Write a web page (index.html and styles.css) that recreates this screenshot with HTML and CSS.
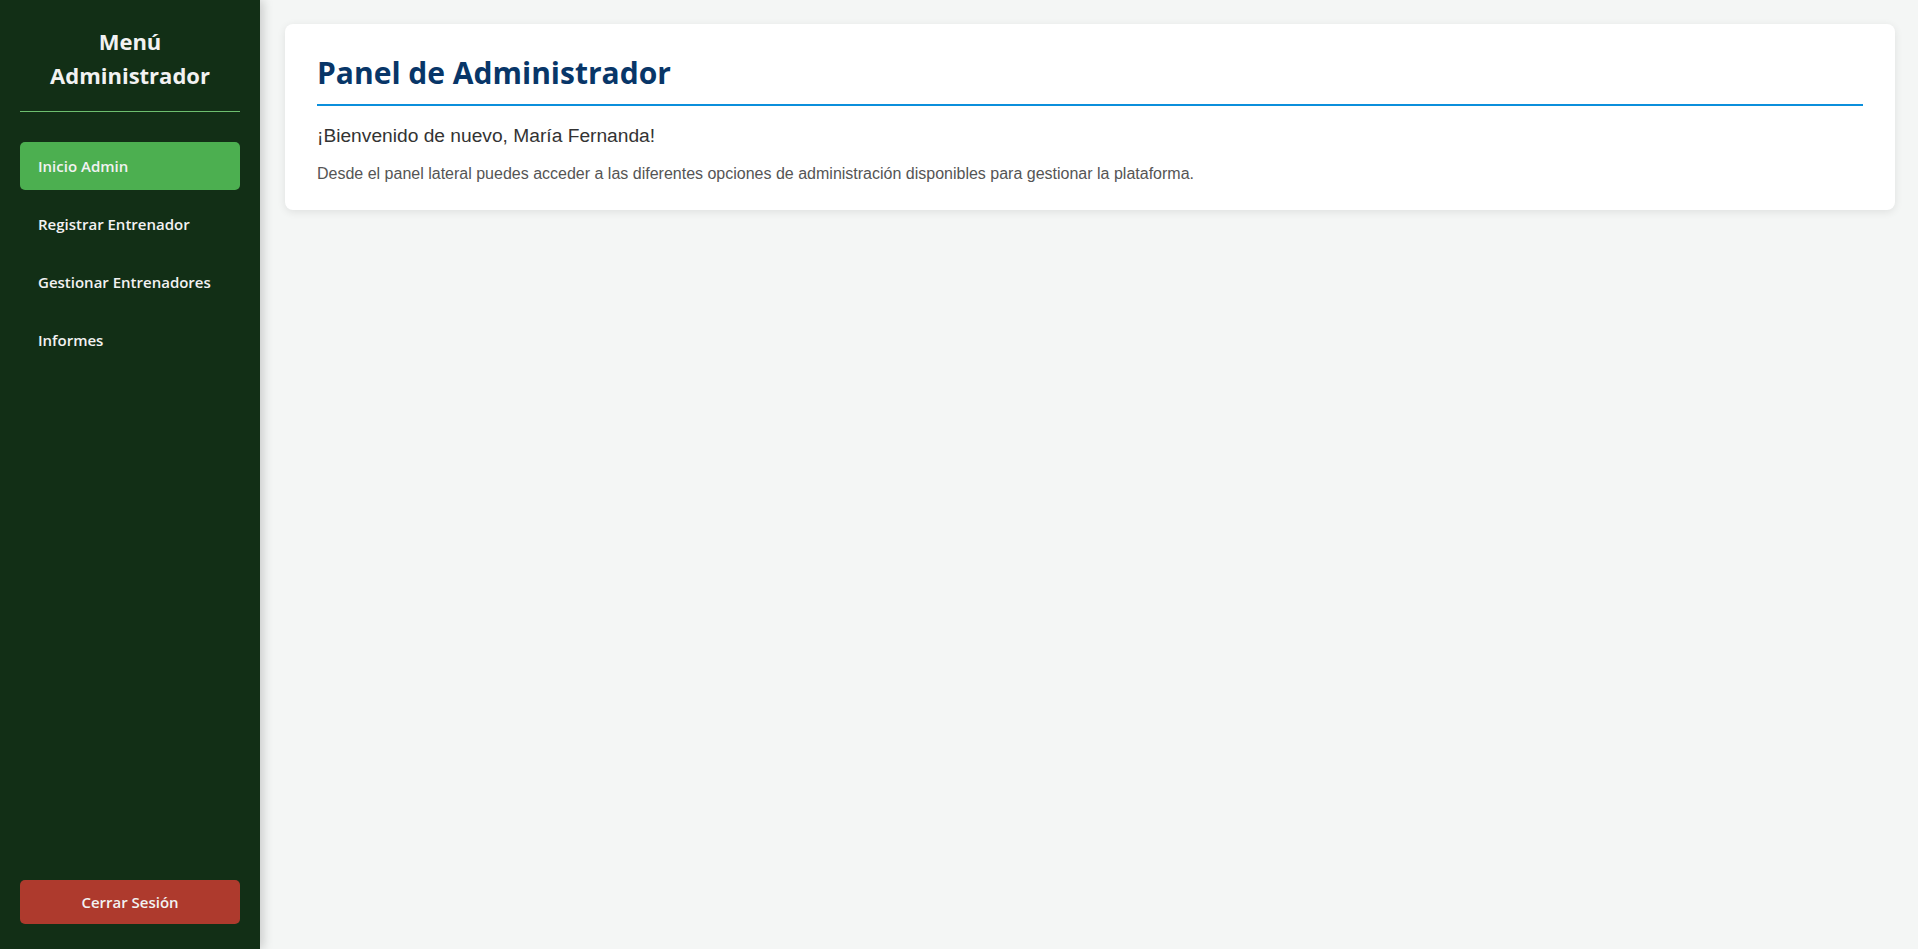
FILE: index.html
```html
<!DOCTYPE html>
<html lang="es">
<head>
<meta charset="utf-8">
<title>Panel de Administrador</title>
<link rel="stylesheet" href="styles.css">
</head>
<body>
<div class="layout">
  <aside class="sidebar">
    <h2 class="sidebar-title">Menú<br>Administrador</h2>
    <hr class="sidebar-rule">
    <nav class="nav">
      <a class="nav-item active" href="#">Inicio Admin</a>
      <a class="nav-item" href="#">Registrar Entrenador</a>
      <a class="nav-item" href="#">Gestionar Entrenadores</a>
      <a class="nav-item" href="#">Informes</a>
    </nav>
    <a class="logout" href="#">Cerrar Sesión</a>
  </aside>
  <main class="main">
    <section class="card">
      <h1 class="card-title">Panel de Administrador</h1>
      <p class="welcome">¡Bienvenido de nuevo, María Fernanda!</p>
      <p class="desc">Desde el panel lateral puedes acceder a las diferentes opciones de administración disponibles para gestionar la plataforma.</p>
    </section>
  </main>
</div>
</body>
</html>
```
FILE: styles.css
```css
* { box-sizing: border-box; }
html, body { margin: 0; padding: 0; height: 100%; }
body {
  font-family: "Liberation Sans", Arial, sans-serif;
  background: #f4f6f5;
}
.layout {
  display: flex;
  height: 100vh;
}
.sidebar {
  width: 260px;
  flex-shrink: 0;
  background: #122f16;
  display: flex;
  flex-direction: column;
  padding: 24px 20px 25px;
  box-shadow: 3px 0 10px rgba(0,0,0,0.18);
  position: relative;
  z-index: 1;
  font-family: "Open Sans", "Noto Sans", sans-serif;
}
.sidebar-title {
  margin: 0;
  text-align: center;
  color: #f2f2f2;
  font-size: 22px;
  line-height: 34px;
  font-weight: 700;
}
.sidebar-rule {
  border: 0;
  border-top: 1px solid #6dbf6f;
  margin: 19px 0 30px;
}
.nav {
  display: flex;
  flex-direction: column;
  gap: 10px;
  flex: 1;
}
.nav-item {
  display: flex;
  align-items: center;
  height: 48px;
  padding: 0 18px;
  color: #f2f2f2;
  text-decoration: none;
  font-size: 15px;
  font-weight: 600;
  border-radius: 5px;
}
.nav-item.active { background: #4caf50; }
.logout {
  display: flex;
  align-items: center;
  justify-content: center;
  height: 44px;
  background: #ae3a2d;
  color: #f2f2f2;
  text-decoration: none;
  font-size: 15px;
  font-weight: 600;
  border-radius: 5px;
}
.main {
  flex: 1;
  padding: 24px 23px 24px 25px;
}
.card {
  background: #fff;
  border-radius: 8px;
  box-shadow: 0 2px 8px rgba(0,0,0,0.09);
  padding: 28px 32px 26px;
}
.card-title {
  margin: 0;
  font-family: "Open Sans", "Noto Sans", sans-serif;
  font-weight: 700;
  font-size: 30px;
  line-height: 42px;
  color: #083668;
  padding-bottom: 10px;
  border-bottom: 2px solid #0b8fdc;
}
.welcome {
  margin: 18px 0 0;
  font-size: 19.2px;
  line-height: 23px;
  color: #333;
}
.desc {
  margin: 17px 0 0;
  font-size: 16px;
  line-height: 20px;
  color: #555;
}
```
